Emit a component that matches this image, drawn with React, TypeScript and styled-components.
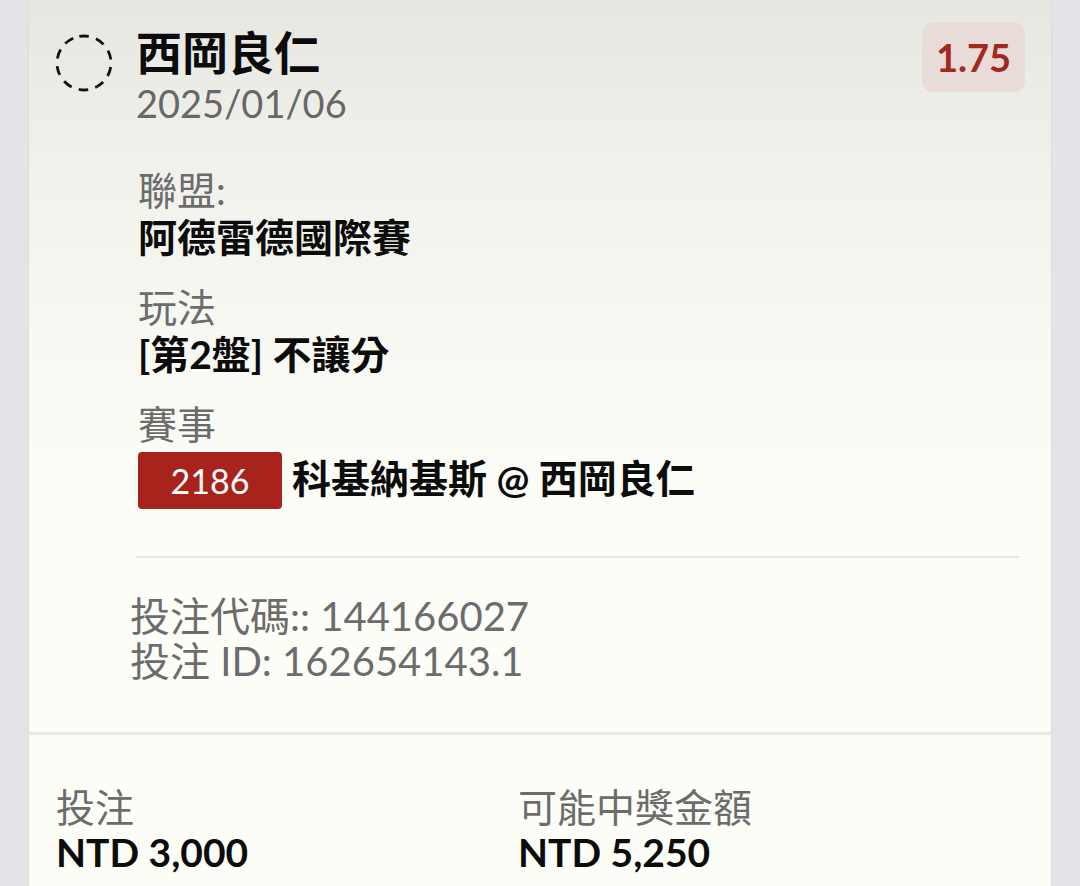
import React from "react";
import styled, { createGlobalStyle } from "styled-components";

const GlobalStyle = createGlobalStyle`
  html, body {
    margin: 0;
    padding: 0;
    background: #e3e4e8;
  }
  body {
    font-family: "Lato", "Noto Sans CJK TC", sans-serif;
  }
`;

const Page = styled.div`
  width: 1080px;
  height: 886px;
  overflow: hidden;
  padding: 0 28px;
  box-sizing: border-box;
  background: #e3e4e8;
`;

const Card = styled.div`
  background: linear-gradient(180deg, #e7e7e2 0px, #f2f2ed 180px, #f9f9f4 360px, #fdfdf8 520px);
  border-left: 1px solid #dcdcd8;
  border-right: 1px solid #dcdcd8;
  min-height: 886px;
`;

const TopSection = styled.div`
  padding: 24px 26px 0 26px;
  border-bottom: 3px solid #e8e8e3;
`;

const Header = styled.div`
  display: flex;
  align-items: flex-start;
`;

const SpinnerWrap = styled.div`
  width: 58px;
  height: 58px;
  margin-top: 10px;
  margin-right: 23px;
  flex-shrink: 0;
`;

const TitleBlock = styled.div`
  display: flex;
  flex-direction: column;
  flex: 1;
`;

const Title = styled.div`
  font-size: 46px;
  font-weight: 700;
  line-height: 57px;
  color: #0c0c0c;
`;

const DateText = styled.div`
  font-size: 38px;
  line-height: 44px;
  color: #676767;
`;

const Odds = styled.div`
  background: #e9dcd8;
  color: #a3291f;
  font-size: 38px;
  font-weight: 700;
  border-radius: 11px;
  width: 103px;
  height: 70px;
  display: flex;
  align-items: center;
  justify-content: center;
  margin-top: -2px;
`;

const Details = styled.div`
  padding-left: 83px;
  margin-top: 42px;
  display: flex;
  flex-direction: column;
  gap: 23px;
`;

const Field = styled.div`
  display: flex;
  flex-direction: column;
`;

const Label = styled.div`
  font-size: 39px;
  line-height: 47px;
  color: #6c6c6c;
`;

const Value = styled.div`
  font-size: 39px;
  line-height: 47px;
  font-weight: 700;
  color: #0c0c0c;
  display: flex;
  align-items: center;
  gap: 10px;
`;

const MatchBadge = styled.span`
  background: #a8231b;
  color: #fff;
  font-size: 34px;
  font-weight: 400;
  border-radius: 4px;
  width: 144px;
  height: 57px;
  margin-top: 4px;
  display: inline-flex;
  align-items: center;
  justify-content: center;
`;

const Divider = styled.div`
  margin: 47px 6px 0 81px;
  height: 2px;
  background: #e6e6e1;
`;

const Codes = styled.div`
  padding: 36px 0 48px 75px;
  font-size: 40px;
  line-height: 45px;
  color: #6c6c6c;
`;

const Summary = styled.div`
  display: grid;
  grid-template-columns: 462px 1fr;
  padding: 50px 27px 0 27px;
`;

const SummaryLabel = styled.div`
  font-size: 39px;
  line-height: 44px;
  color: #6c6c6c;
`;

const Amount = styled.div`
  font-size: 39px;
  line-height: 46px;
  font-weight: 700;
  color: #0c0c0c;
`;

const Spinner = () => (
  <svg width="58" height="58" viewBox="0 0 58 58">
    <circle
      cx="29"
      cy="29"
      r="27"
      fill="none"
      stroke="#111"
      strokeWidth="2.8"
      strokeDasharray="9.5 7.5"
      strokeLinecap="butt"
      transform="rotate(-100 29 29)"
    />
  </svg>
);

export default function App() {
  return (
    <>
      <GlobalStyle />
      <Page>
        <Card>
          <TopSection>
            <Header>
              <SpinnerWrap>
                <Spinner />
              </SpinnerWrap>
              <TitleBlock>
                <Title>西岡良仁</Title>
                <DateText>2025/01/06</DateText>
              </TitleBlock>
              <Odds>1.75</Odds>
            </Header>
            <Details>
              <Field>
                <Label>聯盟:</Label>
                <Value>阿德雷德國際賽</Value>
              </Field>
              <Field>
                <Label>玩法</Label>
                <Value>[第2盤] 不讓分</Value>
              </Field>
              <Field>
                <Label>賽事</Label>
                <Value>
                  <MatchBadge>2186</MatchBadge>
                  <span>科基納基斯 @ 西岡良仁</span>
                </Value>
              </Field>
            </Details>
            <Divider />
            <Codes>
              <div>投注代碼:: 144166027</div>
              <div>投注 ID: 162654143.1</div>
            </Codes>
          </TopSection>
          <Summary>
            <Field>
              <SummaryLabel>投注</SummaryLabel>
              <Amount>NTD 3,000</Amount>
            </Field>
            <Field>
              <SummaryLabel>可能中獎金額</SummaryLabel>
              <Amount>NTD 5,250</Amount>
            </Field>
          </Summary>
        </Card>
      </Page>
    </>
  );
}
